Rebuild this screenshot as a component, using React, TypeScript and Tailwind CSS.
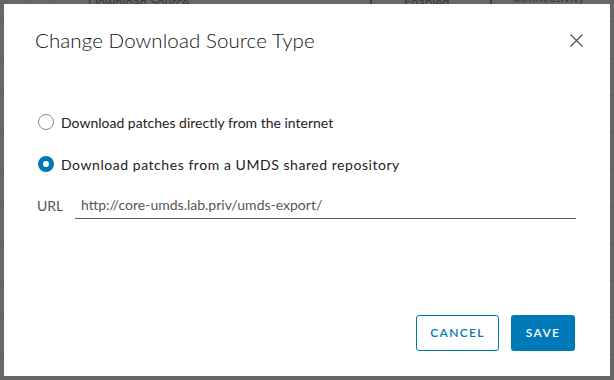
import React from 'react';

const rows = [0, 1, 2, 3, 4, 5, 6, 7, 8];

export default function App() {
  return (
    <div
      className="relative w-[614px] h-[380px] overflow-hidden bg-[#676767]"
      style={{ fontFamily: 'Lato, "Open Sans", sans-serif' }}
    >
      {/* Page behind the overlay (dimmed table) */}
      <div className="flex flex-col text-[#3a3a3a]">
        <div className="flex h-[30px] -mt-[8px] text-[13px] border-b border-[#5c5c5c]">
          <div className="w-[27px] border-r border-[#5f5f5f]" />
          <div className="w-[25px] border-r border-[#5f5f5f]" />
          <div className="w-[320px] pl-[36px] pt-[1px] border-r-2 border-[#3d3d3d]">Download Source</div>
          <div className="w-[120px] pl-[32px] pt-[1px] border-r-2 border-[#3d3d3d]">Enabled</div>
          <div className="flex-1 pl-[20px] -mt-[4px]">Connectivity</div>
        </div>
        {rows.map((r) => (
          <div key={r} className="h-[37px] border-b border-[#5e5e5e]" />
        ))}
      </div>

      {/* Modal */}
      <div className="absolute left-[4px] top-[4px] w-[606px] h-[372px] bg-white flex flex-col px-[31px] pt-[22px] pb-[25px]">
        <div className="flex items-start justify-between">
          <h3 className="text-[20.5px] font-light text-[#111] leading-[28px] tracking-[0.1px]">
            Change Download Source Type
          </h3>
          <button className="mt-[6px] mr-[-5px] w-[16px] h-[16px] flex items-center justify-center">
            <svg width="13" height="13" viewBox="0 0 13 13" fill="none">
              <path d="M0.5 0.5 L12.5 12.5 M12.5 0.5 L0.5 12.5" stroke="#565656" strokeWidth="1.3" />
            </svg>
          </button>
        </div>

        <div className="flex flex-col mt-[58px]">
          <label className="flex items-center gap-[7px] h-[20px] pl-[3px]">
            <span className="w-[16px] h-[16px] rounded-full border border-[#8c8c8c] bg-white" />
            <span className="text-[14px] text-[#222]">Download patches directly from the internet</span>
          </label>
          <label className="flex items-center gap-[7px] h-[20px] mt-[22px] pl-[3px]">
            <span className="w-[16px] h-[16px] rounded-full border-[5px] border-[#0079b8] bg-white" />
            <span className="text-[14px] text-[#222] tracking-[0.55px]">Download patches from a UMDS shared repository</span>
          </label>
          <div className="flex items-end mt-[20px] pl-[2px] pr-[3px]">
            <span className="w-[38px] text-[14px] text-[#565656] pb-[3px]">URL</span>
            <div className="flex-1 border-b border-[#5a5a5a] pl-[6px] pb-[3px] text-[14px] text-[#565656]">
              http://core-umds.lab.priv/umds-export/
            </div>
          </div>
        </div>

        <div className="mt-auto flex justify-end gap-[12px] pr-[4px]">
          <button className="h-[36px] w-[83px] rounded-[3px] border border-[#0079b8] text-[#0079b8] text-[12px] font-semibold tracking-[1.3px]">
            CANCEL
          </button>
          <button className="h-[36px] w-[64px] rounded-[3px] bg-[#0079b8] text-white text-[12px] font-semibold tracking-[1.3px]">
            SAVE
          </button>
        </div>
      </div>
    </div>
  );
}
